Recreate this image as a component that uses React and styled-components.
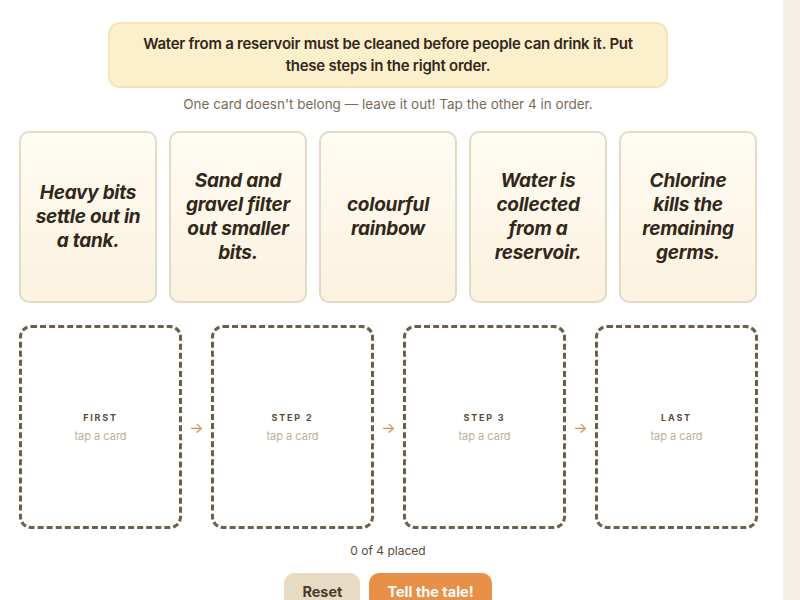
import React from "react";
import styled, { createGlobalStyle } from "styled-components";

const GlobalStyle = createGlobalStyle`
  html, body {
    margin: 0;
    padding: 0;
    background: #f5f0e6;
    font-family: "Inter", "Noto Sans", "Liberation Sans", sans-serif;
    color: #3a2a1a;
  }
`;

const Page = styled.div`
  width: 783px;
  min-height: 100vh;
  box-sizing: border-box;
  background: #ffffff;
  padding: 22px 26px 0 19px;
`;

const Column = styled.div`
  width: 738px;
  display: flex;
  flex-direction: column;
  align-items: center;
`;

const Prompt = styled.div`
  width: 560px;
  box-sizing: border-box;
  background: #fbf0cb;
  border: 2px solid #f3e5b8;
  border-radius: 12px;
  padding: 9px 24px;
  text-align: center;
  font-size: 15px;
  font-weight: 600;
  letter-spacing: -0.25px;
  line-height: 22px;
  color: #33261a;
`;

const Hint = styled.p`
  margin: 6px 0 0;
  font-size: 13.5px;
  line-height: 20px;
  color: #7a6a58;
`;

const CardRow = styled.div`
  margin-top: 17px;
  width: 100%;
  display: grid;
  grid-template-columns: repeat(5, 138px);
  gap: 12px;
`;

const Card = styled.button`
  height: 172px;
  box-sizing: border-box;
  border: 2px solid #e2dac6;
  border-radius: 10px;
  background: linear-gradient(180deg, #fffcf3 0%, #fbf2df 100%);
  padding: 0 12px;
  display: flex;
  align-items: center;
  justify-content: center;
  text-align: center;
  font-family: inherit;
  font-size: 19px;
  font-weight: 700;
  font-style: italic;
  letter-spacing: -0.25px;
  line-height: 24px;
  color: #33261a;
  cursor: pointer;
`;

const SlotRow = styled.div`
  margin-top: 22px;
  width: 100%;
  display: grid;
  grid-template-columns: 163px 29px 163px 29px 163px 29px 163px;
  align-items: center;
`;

const Slot = styled.div`
  height: 204px;
  box-sizing: border-box;
  border: 3px dashed #6e5e4e;
  border-radius: 12px;
  background: #ffffff;
  display: flex;
  flex-direction: column;
  align-items: center;
  justify-content: center;
  gap: 6px;
`;

const SlotLabel = styled.span`
  font-size: 9px;
  font-weight: 700;
  letter-spacing: 1.8px;
  color: #5a4a3a;
  text-transform: uppercase;
`;

const SlotHint = styled.span`
  font-size: 11px;
  color: #bcae9c;
`;

const Arrow = styled.span`
  text-align: center;
  font-size: 15px;
  color: #e08a48;
`;

const Count = styled.p`
  margin: 13px 0 0;
  font-size: 12px;
  line-height: 18px;
  color: #5a4a3a;
`;

const Actions = styled.div`
  margin-top: 13px;
  display: flex;
  gap: 9px;
`;

const Button = styled.button`
  height: 36px;
  border: none;
  border-radius: 10px;
  padding: 0 18px;
  font-family: inherit;
  font-size: 14.5px;
  font-weight: 700;
  cursor: pointer;
  background: ${({ $primary }) => ($primary ? "#e88f48" : "#e6dcc3")};
  color: ${({ $primary }) => ($primary ? "#ffffff" : "#4a3a2a")};
`;

const cards = [
  "Heavy bits settle out in a tank.",
  "Sand and gravel filter out smaller bits.",
  "colourful rainbow",
  "Water is collected from a reservoir.",
  "Chlorine kills the remaining germs.",
];

const slots = ["First", "Step 2", "Step 3", "Last"];

export default function App() {
  return (
    <>
      <GlobalStyle />
      <Page>
        <Column>
          <Prompt>
            Water from a reservoir must be cleaned before people can drink it. Put
            these steps in the right order.
          </Prompt>
          <Hint>One card doesn't belong — leave it out! Tap the other 4 in order.</Hint>
          <CardRow>
            {cards.map((text) => (
              <Card key={text}>{text}</Card>
            ))}
          </CardRow>
          <SlotRow>
            {slots.map((label, i) => (
              <React.Fragment key={label}>
                {i > 0 && <Arrow>→</Arrow>}
                <Slot>
                  <SlotLabel>{label}</SlotLabel>
                  <SlotHint>tap a card</SlotHint>
                </Slot>
              </React.Fragment>
            ))}
          </SlotRow>
          <Count>0 of 4 placed</Count>
          <Actions>
            <Button>Reset</Button>
            <Button $primary>Tell the tale!</Button>
          </Actions>
        </Column>
      </Page>
    </>
  );
}
